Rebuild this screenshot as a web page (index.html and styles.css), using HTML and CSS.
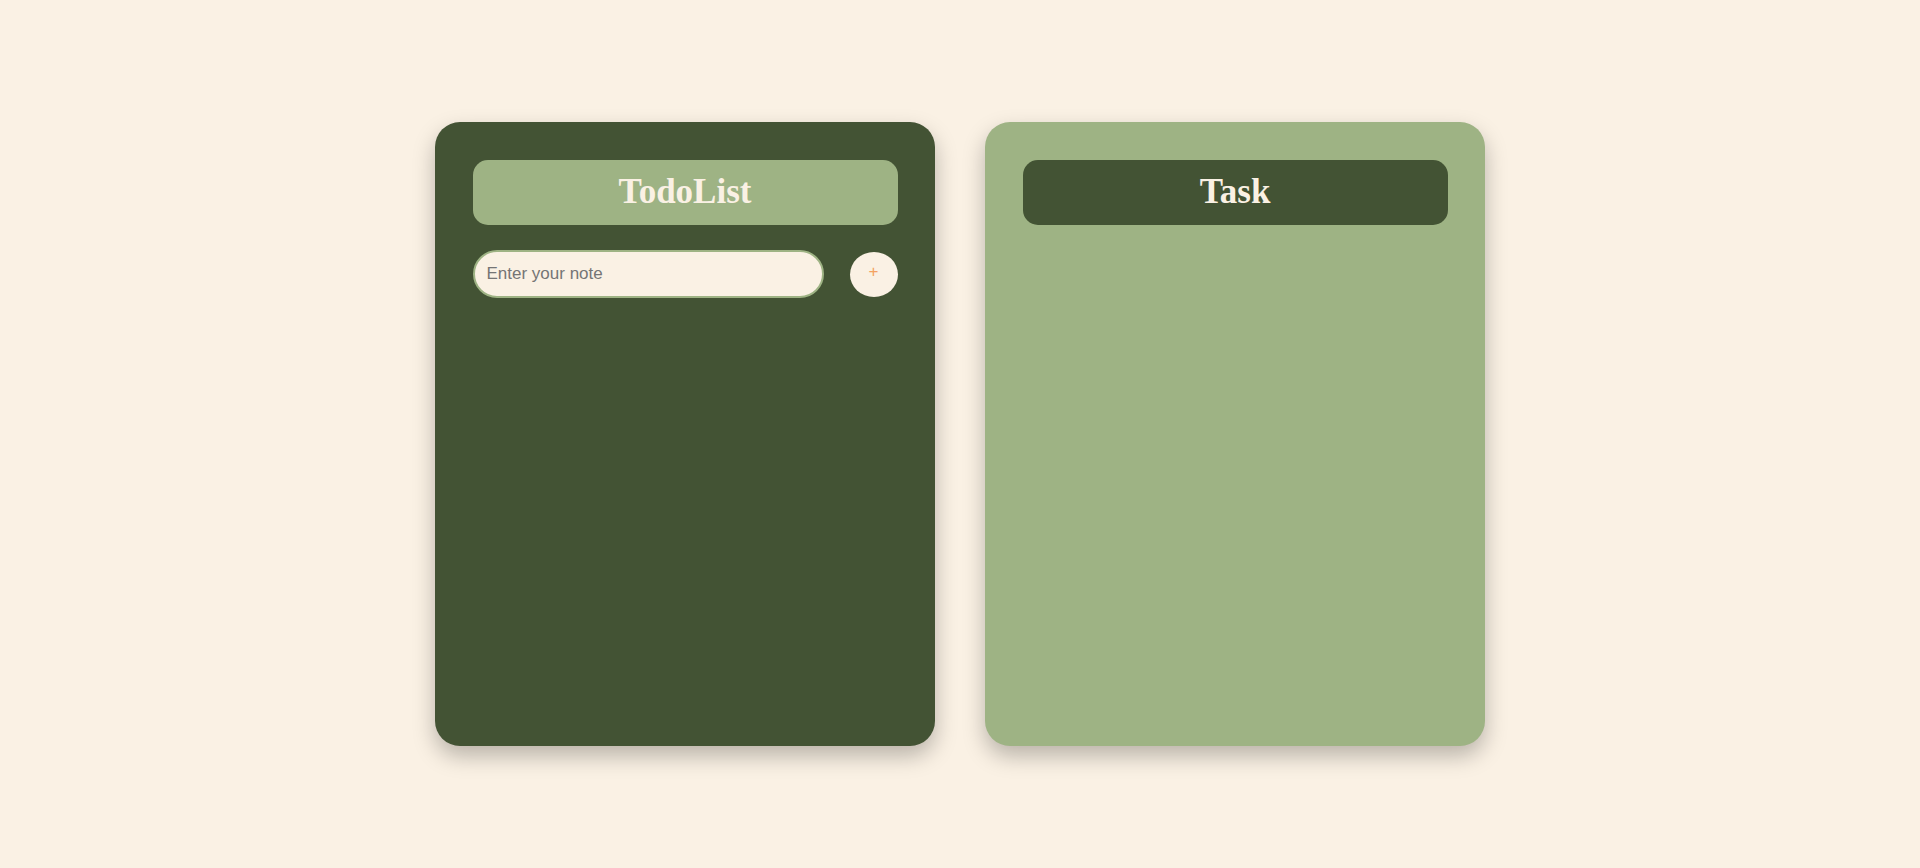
FILE: index.html
```html
<!DOCTYPE html>
<html lang="en">
<head>
<meta charset="UTF-8">
<title>TodoList</title>
<link rel="stylesheet" href="styles.css">
</head>
<body>
<main class="board">
  <section class="card card-dark">
    <div class="title-bar title-light"><h1>TodoList</h1></div>
    <div class="entry-row">
      <input class="note-input" type="text" placeholder="Enter your note">
      <button class="add-btn" type="button">+</button>
    </div>
  </section>
  <section class="card card-light">
    <div class="title-bar title-dark"><h1>Task</h1></div>
  </section>
</main>
</body>
</html>
```

FILE: styles.css
```css
* { box-sizing: border-box; }
html, body { margin: 0; padding: 0; }
body {
  background: #FAF1E4;
  height: 868px;
  font-family: "Liberation Serif", "Times New Roman", serif;
}
.board {
  height: 100vh;
  display: flex;
  justify-content: center;
  align-items: center;
  gap: 50px;
}
.card {
  width: 500px;
  height: 624px;
  border-radius: 25px;
  box-shadow: 0 10px 22px rgba(0, 0, 0, 0.26);
  display: flex;
  flex-direction: column;
  align-items: center;
  padding-top: 38px;
}
.card-dark { background: #435334; }
.card-light { background: #9EB384; }
.title-bar {
  width: 85%;
  height: 65px;
  border-radius: 15px;
  display: flex;
  align-items: center;
  justify-content: center;
}
.title-light { background: #9EB384; }
.title-dark { background: #435334; }
.title-bar h1 {
  margin: 0;
  font-size: 35px;
  font-weight: bold;
  color: #FAF1E4;
  line-height: 1.107;
}
.entry-row {
  width: 85%;
  margin-top: 25px;
  display: flex;
  align-items: center;
  gap: 26px;
}
.note-input {
  width: 351px;
  height: 48px;
  border: 2px solid #9EB384;
  border-radius: 25px;
  background: #FAF1E4;
  padding: 0 12px;
  font-family: "Liberation Sans", Arial, sans-serif;
  font-size: 17px;
  color: #333;
  outline: none;
}
.note-input::placeholder { color: #757575; }
.add-btn {
  width: 48px;
  height: 45px;
  border: none;
  border-radius: 50%;
  background: #FAF1E4;
  color: #F4A261;
  font-family: "Liberation Sans", Arial, sans-serif;
  font-size: 17px;
  padding: 0 0 4px 0;
  cursor: pointer;
}
```
